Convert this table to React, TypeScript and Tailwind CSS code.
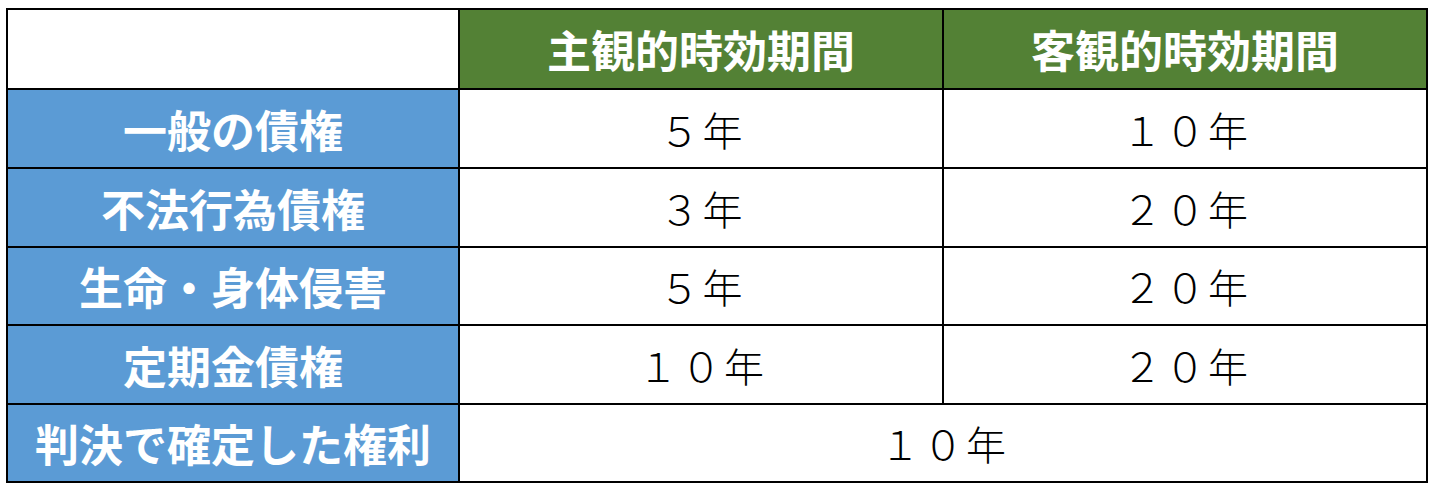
const ROWS: { label: string; subjective: string; objective?: string; h: string }[] = [
  { label: "一般の債権", subjective: "５年", objective: "１０年", h: "h-[77px]" },
  { label: "不法行為債権", subjective: "３年", objective: "２０年", h: "h-[77px]" },
  { label: "生命・身体侵害", subjective: "５年", objective: "２０年", h: "h-[76px]" },
  { label: "定期金債権", subjective: "１０年", objective: "２０年", h: "h-[77px]" },
  { label: "判決で確定した権利", subjective: "１０年", h: "h-[76px]" },
];

const font = { fontFamily: '"Noto Sans CJK JP", "Noto Sans", sans-serif' };

export default function App() {
  return (
    <div className="min-h-screen bg-white pt-[8px] pl-[6px]" style={font}>
      <div className="grid w-[1422px] grid-cols-[450px_482px_482px] gap-[2px] bg-black p-[2px]">
        <div className="h-[78px] bg-white" />
        <div className="flex h-[78px] items-center justify-center bg-[#538135] text-[44px] font-bold text-white">
          主観的時効期間
        </div>
        <div className="flex h-[78px] items-center justify-center bg-[#538135] text-[44px] font-bold text-white">
          客観的時効期間
        </div>
        {ROWS.map((r) => (
          <Row key={r.label} {...r} />
        ))}
      </div>
    </div>
  );
}

function Row({ label, subjective, objective, h }: { label: string; subjective: string; objective?: string; h: string }) {
  const cell = `flex ${h} items-center justify-center bg-white pl-[3px] text-[40px] font-light tracking-[3px] text-black`;
  return (
    <>
      <div className={`flex ${h} items-center justify-center bg-[#5b9bd5] text-[44px] font-bold text-white`}>
        {label}
      </div>
      {objective ? (
        <>
          <div className={cell}>{subjective}</div>
          <div className={cell}>{objective}</div>
        </>
      ) : (
        <div className={`col-span-2 ${cell}`}>{subjective}</div>
      )}
    </>
  );
}
